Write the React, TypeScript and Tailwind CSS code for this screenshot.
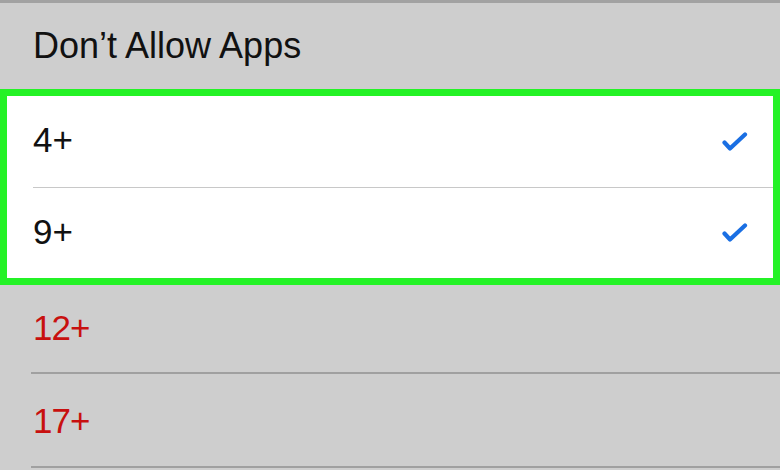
import React from "react";

function Check() {
  return (
    <svg width="26" height="22" viewBox="0 0 26 22" fill="none">
      <path d="M2.5 11.5 L8 17.5 L23 3.5" stroke="#1a6fe3" strokeWidth="4.2" strokeLinecap="round" strokeLinejoin="round" />
    </svg>
  );
}

export default function App() {
  return (
    <div
      className="w-[780px] h-[470px] overflow-hidden bg-[#cecece] border-t-[3px] border-[#a2a2a2] text-[35px] leading-none text-[#111]"
      style={{ fontFamily: '"Liberation Sans", Arial, sans-serif' }}
    >
      <div className="h-[86px] flex items-center pl-[33px] text-[36px]">Don’t Allow Apps</div>
      <div className="border-[7px] border-[#24f226] bg-white">
        <div className="h-[91px] flex items-center justify-between pl-[26px] pr-[25px]">
          <span className="-mt-[4px]">4+</span>
          <Check />
        </div>
        <div className="ml-[26px] h-px bg-[#c8c8c8]" />
        <div className="h-[90px] flex items-center justify-between pl-[26px] pr-[25px]">
          <span className="-mt-[4px]">9+</span>
          <Check />
        </div>
      </div>
      <div className="h-[87px] flex items-center pl-[33px] text-[#c8100f]">
        <span className="-mt-[2px] tracking-[-1px]">12+</span>
      </div>
      <div className="ml-[31px] h-[2px] bg-[#a0a0a0]" />
      <div className="h-[92px] flex items-center pl-[33px] text-[#c8100f]">
        <span className="tracking-[-1px]">17+</span>
      </div>
      <div className="ml-[31px] h-[2px] bg-[#a0a0a0]" />
    </div>
  );
}
